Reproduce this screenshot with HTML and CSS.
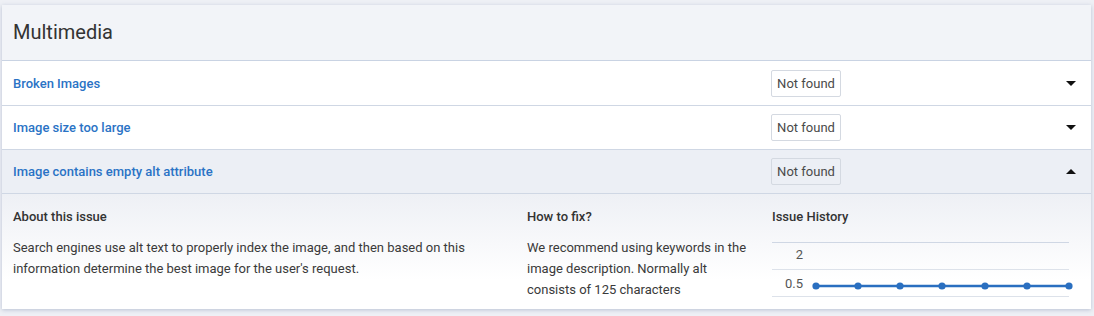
FILE: index.html
```html
<!DOCTYPE html>
<html>
<head>
<meta charset="utf-8">
<link rel="stylesheet" href="styles.css">
</head>
<body>
<div class="page">
  <section class="card">
    <header class="card-head">Multimedia</header>
    <div class="row">
      <a class="row-title">Broken Images</a>
      <span class="badge">Not found</span>
      <span class="caret down"></span>
    </div>
    <div class="row">
      <a class="row-title">Image size too large</a>
      <span class="badge">Not found</span>
      <span class="caret down"></span>
    </div>
    <div class="row open">
      <a class="row-title">Image contains empty alt attribute</a>
      <span class="badge">Not found</span>
      <span class="caret up"></span>
    </div>
    <div class="details">
      <div class="col about">
        <h4>About this issue</h4>
        <p>Search engines use alt text to properly index the image, and then based on this information determine the best image for the user's request.</p>
      </div>
      <div class="col fix">
        <h4>How to fix?</h4>
        <p>We recommend using keywords in the image description. Normally alt consists of 125 characters</p>
      </div>
      <div class="col history">
        <h4>Issue History</h4>
        <div class="chart">
          <div class="grid-row"><span class="lbl">2</span></div>
          <div class="grid-row"><span class="lbl">0.5</span></div>
          <svg class="line" width="270" height="12" viewBox="0 0 270 12">
            <line x1="13" y1="6" x2="266" y2="6" stroke="#2a6fc0" stroke-width="2.5"/>
            <g fill="#2a6fc0">
              <circle cx="13" cy="6" r="3.6"/>
              <circle cx="55" cy="6" r="3.6"/>
              <circle cx="97" cy="6" r="3.6"/>
              <circle cx="139" cy="6" r="3.6"/>
              <circle cx="182" cy="6" r="3.6"/>
              <circle cx="224" cy="6" r="3.6"/>
              <circle cx="266" cy="6" r="3.6"/>
            </g>
          </svg>
        </div>
      </div>
    </div>
  </section>
</div>
</body>
</html>
```

FILE: styles.css
```css
* { box-sizing: border-box; }
html, body {
  margin: 0;
  padding: 0;
  background: #eef0f5;
  font-family: Roboto, "Liberation Sans", Arial, sans-serif;
}
.page {
  padding: 5px 3px 0 2px;
  height: 316px;
}
.card {
  background: #fff;
  width: 1089px;
  box-shadow: 0 1px 4px rgba(120, 135, 170, 0.45);
}
.card-head {
  height: 56px;
  background: #f2f4f8;
  border-bottom: 1px solid #c9d3e3;
  padding: 0 11px;
  display: flex;
  align-items: center;
  font-size: 20px;
  color: #333;
  padding-bottom: 1px;
}
.row {
  height: 44px;
  border-bottom: 1px solid #cfd7e4;
  display: flex;
  align-items: center;
  padding: 0 11px;
}
.row:first-of-type { height: 45px; }
.row.open { background: #eceff5; }
.row-title {
  flex: 1;
  color: #2a73c5;
  font-size: 13px;
  font-weight: 500;
  cursor: pointer;
}
.badge {
  width: 70px;
  height: 27px;
  border: 1px solid #d4d9e1;
  border-radius: 2px;
  font-size: 13px;
  color: #4a4a4a;
  display: flex;
  align-items: center;
  justify-content: center;
  margin-right: 225px;
  background: #fff;
}
.row.open .badge { background: #eceff5; }
.caret {
  width: 0;
  height: 0;
  border-left: 5px solid transparent;
  border-right: 5px solid transparent;
  margin-right: 4px;
}
.caret.down { border-top: 5px solid #111; }
.caret.up { border-bottom: 5px solid #111; }
.details {
  height: 115px;
  background: linear-gradient(#eef0f5, #ffffff 75%);
  display: flex;
  padding: 0 11px;
}
.col h4 {
  margin: 15px 0 0;
  font-size: 13px;
  font-weight: 500;
  color: #333;
  line-height: 16px;
}
.col p {
  margin: 12px 0 0;
  font-size: 13px;
  line-height: 21px;
  color: #3a3a3a;
}
.about { width: 514px; }
.about p { width: 470px; }
.fix { width: 245px; }
.fix p { width: 230px; }
.history { width: 297px; }
.chart {
  position: relative;
  margin-top: 17px;
  width: 297px;
  border-top: 1px solid #cfd7e4;
}
.grid-row {
  height: 27px;
  border-bottom: 1px solid #dde2ea;
  position: relative;
}
.lbl {
  position: absolute;
  right: 266px;
  font-size: 13px;
  color: #555;
}
.grid-row:first-child .lbl { top: 4px; }
.grid-row:nth-child(2) .lbl { top: 6px; }
.line {
  position: absolute;
  left: 31px;
  top: 37px;
  overflow: visible;
}
```
